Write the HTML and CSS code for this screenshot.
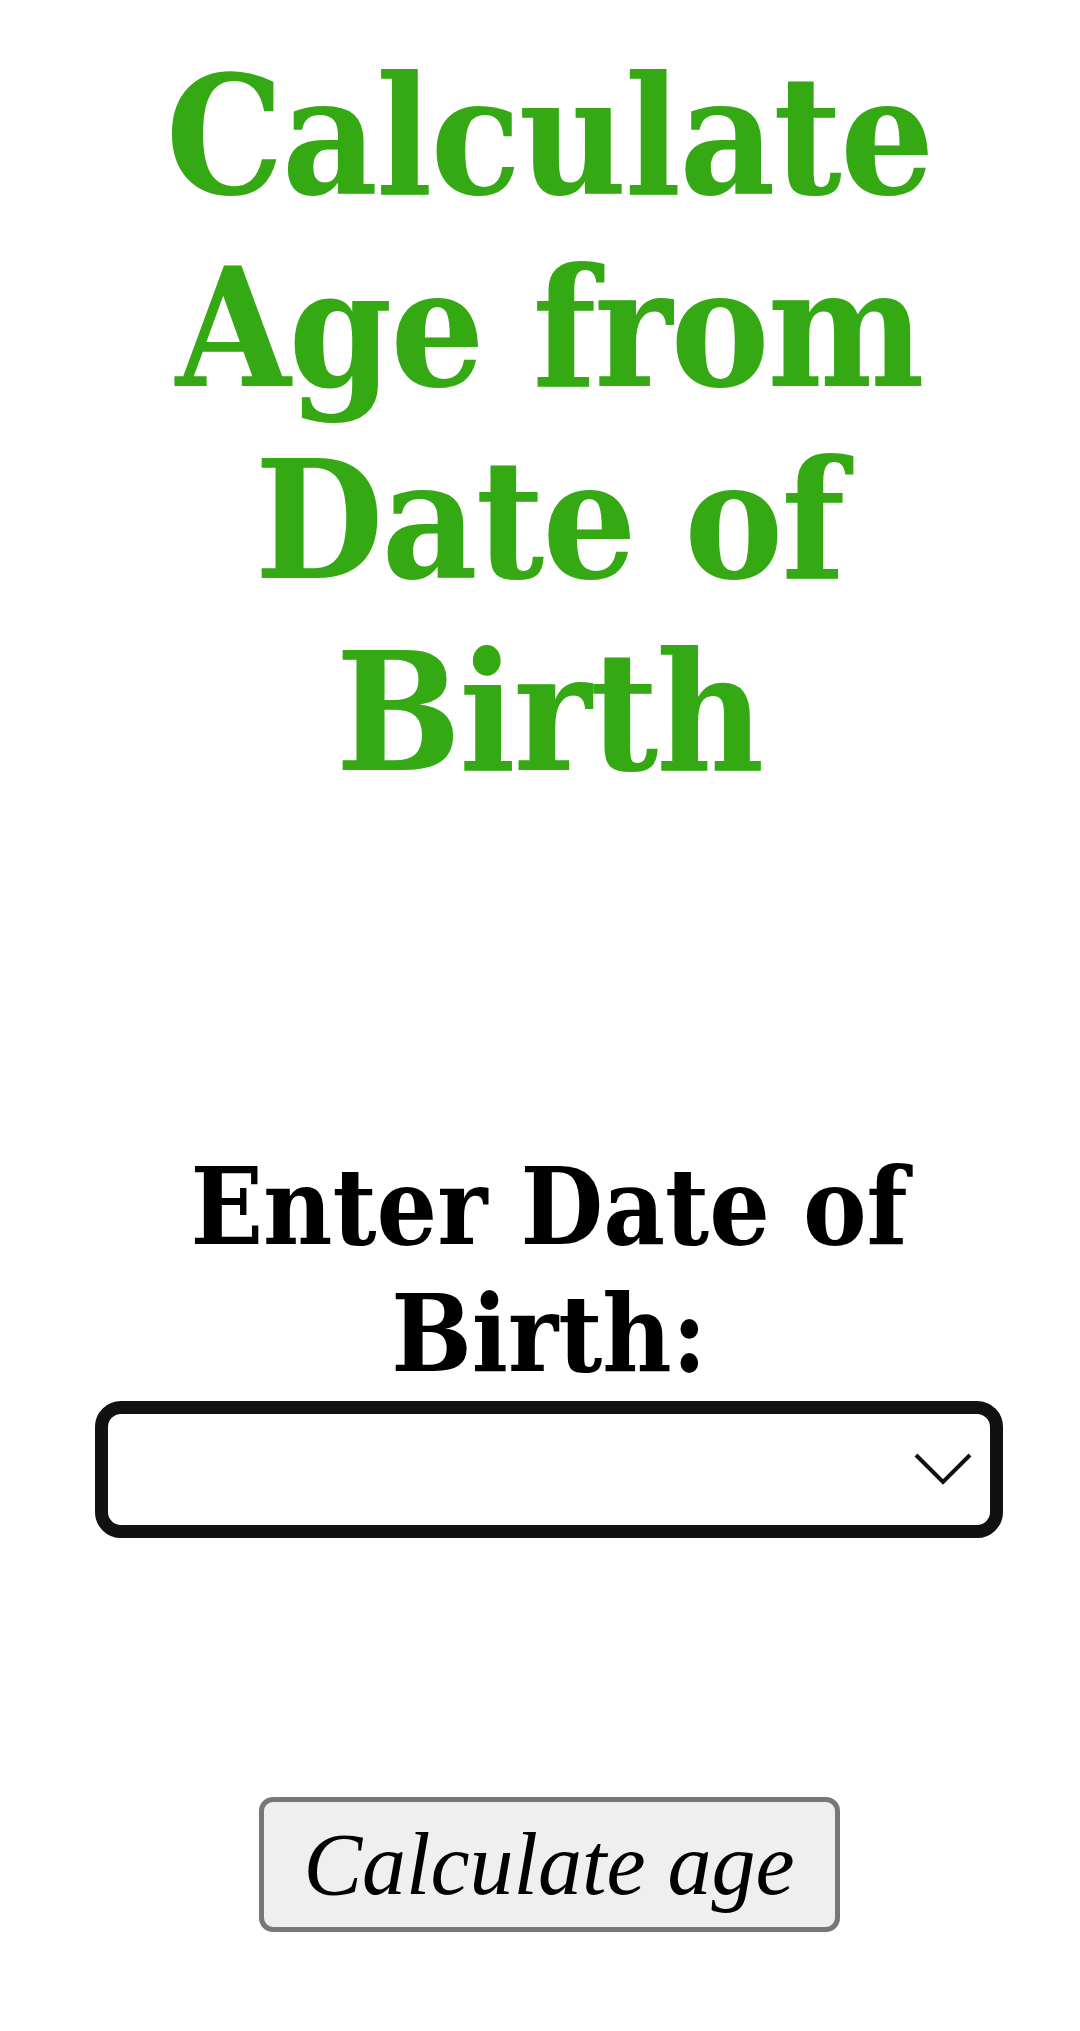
FILE: index.html
```html
<!DOCTYPE html>
<html>
<head>
<meta charset="utf-8">
<link rel="stylesheet" href="styles.css">
</head>
<body>
<main class="page">
  <h1 class="title">Calculate Age from Date of Birth</h1>
  <label class="label" for="dob">Enter Date of Birth:</label>
  <div class="date-field" id="dob">
    <svg class="chevron" width="58" height="32" viewBox="0 0 58 32"><path d="M2 2 L29 29 L56 2" fill="none" stroke="#111" stroke-width="4"/></svg>
  </div>
  <button class="calc-btn" type="button">Calculate age</button>
</main>
</body>
</html>
```
FILE: styles.css
```css
html, body {
  margin: 0;
  padding: 0;
  background: #fff;
}
.page {
  padding: 8px 8px 8px 26px;
  display: flex;
  flex-direction: column;
  align-items: center;
  text-align: center;
}
.title {
  font-family: "DejaVu Serif Condensed", "DejaVu Serif", serif;
  font-weight: bold;
  font-size: 165px;
  line-height: 192px;
  letter-spacing: -2px;
  color: #35a914;
  margin: 32px 0 0 0;
}
.label {
  display: block;
  font-family: "DejaVu Serif Condensed", "DejaVu Serif", serif;
  font-weight: bold;
  font-size: 106px;
  line-height: 127px;
  color: #000;
  margin-top: 335px;
  padding: 0 100px;
}
.date-field {
  box-sizing: border-box;
  width: 908px;
  height: 137px;
  margin-top: 4px;
  border: 13px solid #111;
  border-radius: 26px;
  background: #fff;
  display: flex;
  align-items: center;
  justify-content: flex-end;
  padding-right: 18px;
}
.chevron {
  display: block;
  margin-top: -2px;
}
.calc-btn {
  box-sizing: border-box;
  margin-top: 259px;
  width: 581px;
  height: 135px;
  border: 5px solid #777;
  border-radius: 14px;
  background: #efefef;
  font-family: "Liberation Serif", serif;
  font-style: italic;
  font-size: 88px;
  color: #000;
  padding: 0;
}
```
